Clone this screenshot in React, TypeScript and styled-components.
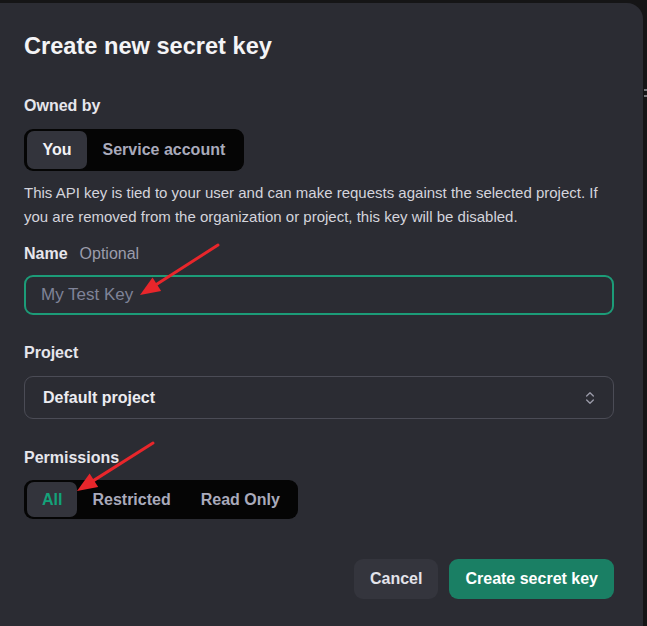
import React from "react";
import styled, { createGlobalStyle } from "styled-components";
import { ChevronsUpDown } from "lucide-react";

const GlobalStyle = createGlobalStyle`
  html, body {
    margin: 0;
    padding: 0;
    background: #151516;
    overflow: hidden;
  }
  * {
    box-sizing: border-box;
  }
`;

const Page = styled.div`
  position: relative;
  width: 647px;
  height: 626px;
  font-family: "Liberation Sans", Arial, sans-serif;
  color: #ececf1;
`;

const Card = styled.div`
  margin: 3px 4px 0 -16px;
  height: 640px;
  background: #2b2c33;
  border-radius: 16px;
  padding: 27px 29px 26px 40px;
  display: flex;
  flex-direction: column;
`;

const Title = styled.h2`
  margin: 0;
  font-size: 23.6px;
  line-height: 32px;
  font-weight: 700;
  color: #f4f4f6;
`;

const Label = styled.div<{ $top: number }>`
  margin-top: ${({ $top }) => $top}px;
  font-size: 16px;
  line-height: 24px;
  font-weight: 700;
  color: #e6e6ec;
`;

const Muted = styled.span`
  margin-left: 12px;
  font-weight: 400;
  color: #9b9cab;
`;

const Segmented = styled.div<{ $top: number; $height: number; $pad: number }>`
  margin-top: ${({ $top }) => $top}px;
  align-self: flex-start;
  display: flex;
  height: ${({ $height }) => $height}px;
  padding: 2px 3px;
  background: #050505;
  border-radius: 9px;
  & > button {
    padding: 0 ${({ $pad }) => $pad}px;
  }
`;

const Segment = styled.button<{ $active?: boolean; $green?: boolean }>`
  border: none;
  margin: 0;
  border-radius: 7px;
  font-family: inherit;
  font-size: 16px;
  font-weight: 700;
  background: ${({ $active }) => ($active ? "#33343c" : "transparent")};
  color: ${({ $active, $green }) =>
    $green ? "#14a27a" : $active ? "#f2f2f5" : "#a9aabb"};
  cursor: pointer;
`;

const Description = styled.p`
  margin: 10px 0 0;
  font-size: 15px;
  line-height: 24px;
  color: #d4d4dc;
`;

const TextInput = styled.input`
  margin-top: 9px;
  width: 100%;
  height: 40px;
  padding: 0 15px;
  border: 2px solid #1c9c78;
  border-radius: 9px;
  background: transparent;
  font-family: inherit;
  font-size: 17px;
  color: #ececf1;
  outline: none;
  caret-color: #d0d0e0;
  &::placeholder {
    color: #7f8398;
  }
`;

const Select = styled.div`
  margin-top: 11px;
  height: 43px;
  display: flex;
  align-items: center;
  justify-content: space-between;
  padding: 0 15px 0 18px;
  border: 1px solid #4b4c56;
  border-radius: 9px;
  font-size: 16px;
  font-weight: 700;
  color: #ececf1;
  svg {
    color: #9a9aa8;
  }
`;

const Actions = styled.div`
  margin-top: 40px;
  display: flex;
  justify-content: flex-end;
  gap: 11px;
`;

const Button = styled.button<{ $primary?: boolean }>`
  height: 40px;
  padding: 0 16px;
  border: none;
  border-radius: 9px;
  font-family: inherit;
  font-size: 16px;
  font-weight: 700;
  background: ${({ $primary }) => ($primary ? "#1a7f64" : "#34353d")};
  color: ${({ $primary }) => ($primary ? "#ffffff" : "#e3e3ea")};
  cursor: pointer;
`;

const EdgeMark = styled.span`
  position: absolute;
  right: 0;
  top: 86px;
  width: 3px;
  height: 8px;
  border-top: 2px solid #77777c;
  border-bottom: 2px solid #77777c;
`;

const Arrows = styled.svg`
  position: absolute;
  left: 0;
  top: 0;
  pointer-events: none;
`;

const arrows = [
  { tail: [218, 242], tip: [140, 292] },
  { tail: [153, 440], tip: [77, 488] }
];

function Arrow({ tail, tip }: { tail: number[]; tip: number[] }) {
  const dx = tip[0] - tail[0];
  const dy = tip[1] - tail[1];
  const len = Math.hypot(dx, dy);
  const ux = dx / len;
  const uy = dy / len;
  const bx = tip[0] - ux * 20;
  const by = tip[1] - uy * 20;
  const nx = -uy * 8;
  const ny = ux * 8;
  return (
    <g>
      <line
        x1={tail[0]}
        y1={tail[1]}
        x2={bx + ux * 2}
        y2={by + uy * 2}
        stroke="#e8262b"
        strokeWidth={3}
        strokeLinecap="round"
      />
      <polygon
        points={`${tip[0]},${tip[1]} ${bx + nx},${by + ny} ${bx - nx},${by - ny}`}
        fill="#e8262b"
      />
    </g>
  );
}

export default function App() {
  return (
    <Page>
      <GlobalStyle />
      <Card>
        <Title>Create new secret key</Title>

        <Label $top={32}>Owned by</Label>
        <Segmented $top={11} $height={42} $pad={15.5}>
          <Segment $active>You</Segment>
          <Segment>Service account</Segment>
        </Segmented>
        <Description>
          This API key is tied to your user and can make requests against the
          selected project. If you are removed from the organization or
          project, this key will be disabled.
        </Description>

        <Label $top={13}>
          Name<Muted>Optional</Muted>
        </Label>
        <TextInput placeholder="My Test Key" autoFocus />

        <Label $top={26}>Project</Label>
        <Select>
          Default project
          <ChevronsUpDown size={16} strokeWidth={2} />
        </Select>

        <Label $top={27}>Permissions</Label>
        <Segmented $top={10} $height={39} $pad={15}>
          <Segment $active $green>
            All
          </Segment>
          <Segment>Restricted</Segment>
          <Segment>Read Only</Segment>
        </Segmented>

        <Actions>
          <Button>Cancel</Button>
          <Button $primary>Create secret key</Button>
        </Actions>
      </Card>
      <EdgeMark />
      <Arrows width={647} height={626} viewBox="0 0 647 626">
        {arrows.map((a, i) => (
          <Arrow key={i} tail={a.tail} tip={a.tip} />
        ))}
      </Arrows>
    </Page>
  );
}
